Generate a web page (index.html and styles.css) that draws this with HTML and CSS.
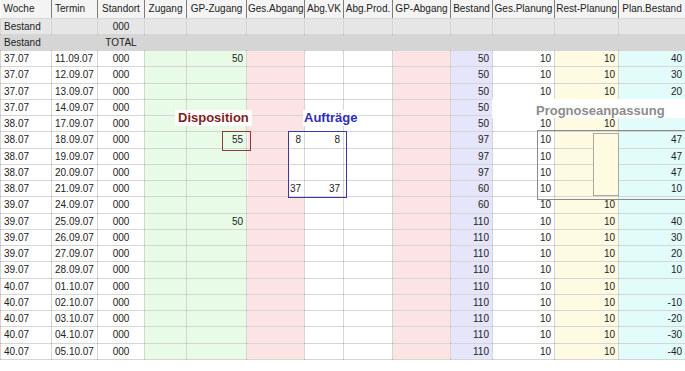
FILE: index.html
```html
<!DOCTYPE html>
<html lang="de">
<head>
<meta charset="utf-8">
<title>Bestandsplanung</title>
<link rel="stylesheet" href="styles.css">
</head>
<body>
<div class="sheet">
  <table class="grid">
    <colgroup>
      <col class="w-woche"><col class="w-termin"><col class="w-standort">
      <col class="w-zugang c-green"><col class="w-gpzugang c-green"><col class="w-gesabgang c-pink">
      <col class="w-vk"><col class="w-prod"><col class="w-gpabgang c-pink"><col class="w-bestand c-lav">
      <col class="w-gesplan"><col class="w-restplan c-yellow"><col class="w-planbestand c-cyan">
    </colgroup>
    <thead>
      <tr><th class="left">Woche</th><th class="left">Termin</th><th>Standort</th><th>Zugang</th><th>GP-Zugang</th><th>Ges.Abgang</th><th>Abg.VK</th><th>Abg.Prod.</th><th>GP-Abgang</th><th>Bestand</th><th>Ges.Planung</th><th>Rest-Planung</th><th>Plan.Bestand</th></tr>
    </thead>
    <tbody>
      <tr class="sum1"><td>Bestand</td><td></td><td>000</td><td></td><td></td><td></td><td></td><td></td><td></td><td></td><td></td><td></td><td></td></tr>
      <tr class="sum2"><td>Bestand</td><td></td><td>TOTAL</td><td></td><td></td><td></td><td></td><td></td><td></td><td></td><td></td><td></td><td></td></tr>
      <tr><td>37.07</td><td>11.09.07</td><td>000</td><td></td><td>50</td><td></td><td></td><td></td><td></td><td>50</td><td>10</td><td>10</td><td>40</td></tr>
      <tr><td>37.07</td><td>12.09.07</td><td>000</td><td></td><td></td><td></td><td></td><td></td><td></td><td>50</td><td>10</td><td>10</td><td>30</td></tr>
      <tr><td>37.07</td><td>13.09.07</td><td>000</td><td></td><td></td><td></td><td></td><td></td><td></td><td>50</td><td>10</td><td>10</td><td>20</td></tr>
      <tr><td>37.07</td><td>14.09.07</td><td>000</td><td></td><td></td><td></td><td></td><td></td><td></td><td>50</td><td></td><td></td><td></td></tr>
      <tr><td>38.07</td><td>17.09.07</td><td>000</td><td></td><td></td><td></td><td></td><td></td><td></td><td>50</td><td>10</td><td>10</td><td></td></tr>
      <tr><td>38.07</td><td>18.09.07</td><td>000</td><td></td><td>55</td><td class="split">8</td><td>8</td><td></td><td></td><td>97</td><td>10</td><td></td><td>47</td></tr>
      <tr><td>38.07</td><td>19.09.07</td><td>000</td><td></td><td></td><td class="split"></td><td></td><td></td><td></td><td>97</td><td>10</td><td></td><td>47</td></tr>
      <tr><td>38.07</td><td>20.09.07</td><td>000</td><td></td><td></td><td class="split"></td><td></td><td></td><td></td><td>97</td><td>10</td><td></td><td>47</td></tr>
      <tr><td>38.07</td><td>21.09.07</td><td>000</td><td></td><td></td><td class="split">37</td><td>37</td><td></td><td></td><td>60</td><td>10</td><td></td><td>10</td></tr>
      <tr><td>39.07</td><td>24.09.07</td><td>000</td><td></td><td></td><td></td><td></td><td></td><td></td><td>60</td><td>10</td><td>10</td><td></td></tr>
      <tr><td>39.07</td><td>25.09.07</td><td>000</td><td></td><td>50</td><td></td><td></td><td></td><td></td><td>110</td><td>10</td><td>10</td><td>40</td></tr>
      <tr><td>39.07</td><td>26.09.07</td><td>000</td><td></td><td></td><td></td><td></td><td></td><td></td><td>110</td><td>10</td><td>10</td><td>30</td></tr>
      <tr><td>39.07</td><td>27.09.07</td><td>000</td><td></td><td></td><td></td><td></td><td></td><td></td><td>110</td><td>10</td><td>10</td><td>20</td></tr>
      <tr><td>39.07</td><td>28.09.07</td><td>000</td><td></td><td></td><td></td><td></td><td></td><td></td><td>110</td><td>10</td><td>10</td><td>10</td></tr>
      <tr><td>40.07</td><td>01.10.07</td><td>000</td><td></td><td></td><td></td><td></td><td></td><td></td><td>110</td><td>10</td><td>10</td><td></td></tr>
      <tr><td>40.07</td><td>02.10.07</td><td>000</td><td></td><td></td><td></td><td></td><td></td><td></td><td>110</td><td>10</td><td>10</td><td>-10</td></tr>
      <tr><td>40.07</td><td>03.10.07</td><td>000</td><td></td><td></td><td></td><td></td><td></td><td></td><td>110</td><td>10</td><td>10</td><td>-20</td></tr>
      <tr><td>40.07</td><td>04.10.07</td><td>000</td><td></td><td></td><td></td><td></td><td></td><td></td><td>110</td><td>10</td><td>10</td><td>-30</td></tr>
      <tr><td>40.07</td><td>05.10.07</td><td>000</td><td></td><td></td><td></td><td></td><td></td><td></td><td>110</td><td>10</td><td>10</td><td>-40</td></tr>
    </tbody>
  </table>

  <div class="label lbl-dispo">Disposition</div>
  <div class="label lbl-auftr">Aufträge</div>
  <div class="label lbl-progn">Prognoseanpassung</div>
  <div class="frame box-dispo"></div>
  <div class="frame box-auftr"></div>
  <div class="frame box-progn"></div>
  <div class="frame box-inner"></div>
</div>
</body>
</html>
```

FILE: styles.css
```css
html, body {
  margin: 0;
  padding: 0;
  background: #ffffff;
}

body {
  font-family: "Liberation Sans", Arial, sans-serif;
  font-size: 10px;
  color: #222222;
}

.sheet {
  position: relative;
  width: 685px;
  height: 371px;
  overflow: hidden;
}

.grid {
  border-collapse: collapse;
  table-layout: fixed;
  width: 685px;
}

.w-woche { width: 51px; }
.w-termin { width: 46px; }
.w-standort { width: 47px; }
.w-zugang { width: 42px; }
.w-gpzugang { width: 60px; }
.w-gesabgang { width: 58px; }
.w-vk { width: 39px; }
.w-prod { width: 49px; }
.w-gpabgang { width: 58px; }
.w-bestand { width: 42px; }
.w-gesplan { width: 62px; }
.w-restplan { width: 64px; }
.w-planbestand { width: 67px; }

.c-green { background: #e7fbe7; }
.c-pink { background: #fde4e4; }
.c-lav { background: #e5e5fb; }
.c-yellow { background: #fffbe2; }
.c-cyan { background: #e2fcfc; }

.grid th,
.grid td {
  padding: 0 3px;
  white-space: nowrap;
  overflow: hidden;
}

.grid thead tr {
  height: 18px;
}

.grid th {
  font-weight: normal;
  background: #f4f4f4;
  border-right: 1px solid #7c7c7c;
  border-bottom: 1px solid #d8d8d8;
  text-align: center;
  padding: 0 1px;
  line-height: 16px;
  color: #222222;
}

.grid th.left {
  text-align: left;
  padding-left: 3px;
}

.grid tbody tr {
  height: 16.25px;
}

.grid td {
  border: 1px solid rgba(0, 0, 0, 0.16);
  line-height: 13px;
  text-align: right;
}

.grid td:nth-child(1),
.grid td:nth-child(2) {
  text-align: left;
}

.grid td:nth-child(3) {
  text-align: center;
}

.grid tr.sum1 td {
  background: #e6e6e6;
}

.grid tr.sum2 td {
  background: #d5d5d5;
}

.grid td.split {
  background: linear-gradient(to right, #fde4e4 42px, #ffffff 42px);
}

.label {
  position: absolute;
  font-size: 13px;
  font-weight: bold;
  line-height: 16px;
  background: #ffffff;
}

.lbl-dispo {
  left: 175px;
  top: 110px;
  padding: 0 3px;
  color: #7d1e1e;
}

.lbl-auftr {
  left: 303px;
  top: 110px;
  padding: 0 1px;
  color: #2e2eb5;
}

.lbl-progn {
  left: 492px;
  top: 99px;
  width: 149px;
  height: 15px;
  padding-top: 4px;
  padding-left: 44px;
  color: #8c8c8c;
}

.frame {
  position: absolute;
  box-sizing: border-box;
}

.box-dispo {
  left: 222px;
  top: 131px;
  width: 29px;
  height: 20px;
  border: 1px solid #8e3a3a;
}

.box-auftr {
  left: 288px;
  top: 131px;
  width: 59px;
  height: 67px;
  border: 1px solid #3a3aa6;
}

.box-progn {
  left: 537px;
  top: 130px;
  width: 170px;
  height: 70px;
  border: 1px solid #8a8a8a;
}

.box-inner {
  left: 593px;
  top: 133px;
  width: 26px;
  height: 63px;
  border: 1px solid #a8a89c;
  background: #fffbe2;
}
```
